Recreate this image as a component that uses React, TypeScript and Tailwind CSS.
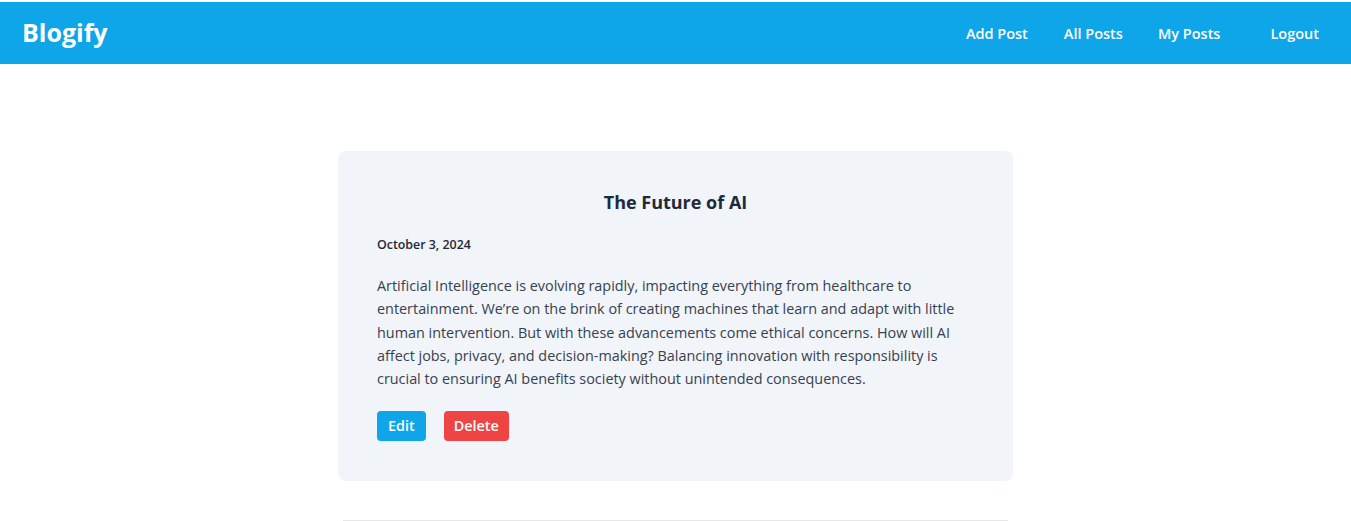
export default function App() {
  return (
    <div className="min-h-screen bg-white pt-[2px] font-['Open_Sans',sans-serif]">
      {/* Navbar */}
      <nav className="flex h-[62px] items-center justify-between bg-[#0ea5e9] pl-[22px] pr-[32px]">
        <h1 className="text-[25px] font-bold text-white">Blogify</h1>
        <div className="flex items-center pt-[2px] text-[14.5px] font-semibold text-white">
          <a className="mr-[36px]">Add Post</a>
          <a className="mr-[35px]">All Posts</a>
          <a className="mr-[50px]">My Posts</a>
          <a>Logout</a>
        </div>
      </nav>

      <main className="flex flex-col items-center pt-[87px]">
        <div className="w-[675px] rounded-lg bg-[#f1f4f8] px-[39px] pt-[37px] pb-[40px]">
          <h2 className="text-center text-[18px] leading-[28px] font-bold text-[#1e293b]">The Future of AI</h2>
          <p className="mt-[21px] text-[12.4px] leading-[16px] font-semibold text-[#1e293b]">October 3, 2024</p>
          <p className="mt-[21px] text-[14.4px] leading-[23.25px] text-[#374151]">
            Artificial Intelligence is evolving rapidly, impacting everything from healthcare to entertainment. We’re on
            the brink of creating machines that learn and adapt with little human intervention. But with these
            advancements come ethical concerns. How will AI affect jobs, privacy, and decision-making? Balancing
            innovation with responsibility is crucial to ensuring AI benefits society without unintended consequences.
          </p>
          <div className="mt-[21px] flex gap-[18px]">
            <button className="h-[30px] rounded bg-[#0ea5e9] px-[11px] text-[14.4px] font-semibold text-white">Edit</button>
            <button className="h-[30px] rounded bg-[#ef4444] px-[10px] text-[14.4px] font-semibold text-white">Delete</button>
          </div>
        </div>
        <div className="mt-[39px] h-px w-[665px] bg-[#e5e7eb]" />
      </main>
    </div>
  )
}
